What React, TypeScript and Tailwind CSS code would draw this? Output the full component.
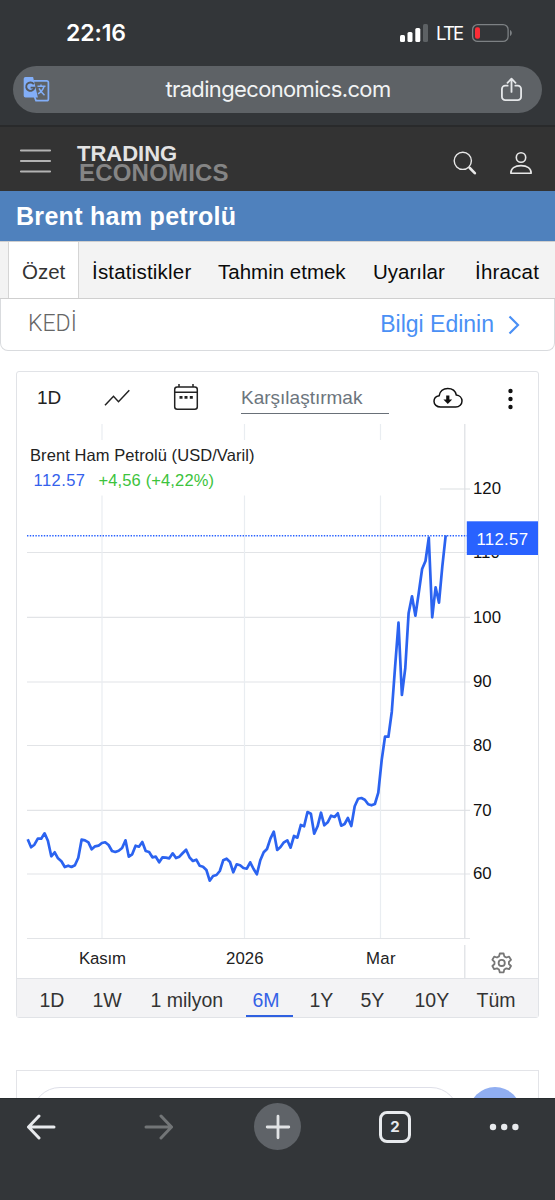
import React from 'react';
import clsx from 'clsx';

const CHART_LEFT = 27.7;
const CHART_STEP = 3.371;

// daily closes, already mapped to the chart's vertical axis
const closes = [
  839.3, 847.3, 844.7, 838.7, 838.7, 833.3, 840.7, 856.3, 852.3, 858.3, 861.3, 867, 865.7, 867, 865.3, 857.7,
  839.7, 840.3, 842.3, 849.3, 846.3, 845.7, 843, 842.3, 845, 851, 852, 850.7, 848, 840.3, 856.7, 854.3,
  845.7, 846.7, 842, 851, 852, 857.3, 856.7, 862.3, 857.3, 857.7, 858.3, 853.3, 858, 856.7, 853, 849.7,
  857.3, 861, 859.7, 865.7, 866.7, 870, 880.7, 876, 875, 871, 860.3, 858.7, 862, 872.3, 864.3, 865.3,
  868, 868.7, 862.3, 869, 874.3, 860.3, 852.3, 849, 838.7, 831.7, 850, 847, 842.3, 840.3, 847.7, 836,
  837.7, 825, 826.3, 812, 813.7, 833.7, 826.3, 812.7, 825.3, 822.3, 815.7, 817, 813.3, 825.7, 824, 818,
  826, 806.3, 798.7, 798, 799.7, 804.3, 805.3, 804, 792.7, 760, 736.7, 736.7, 711.7, 666.7, 622.7, 695,
  668, 613.3, 596.3, 615.7, 593.3, 569, 561, 537.7, 617.3, 587.3, 602.7, 566.7, 535.3,
];

const priceTicks = [
  { label: '120', y: 489 },
  { label: '110', y: 552.5 },
  { label: '100', y: 617.3 },
  { label: '90', y: 682 },
  { label: '80', y: 745.5 },
  { label: '70', y: 810.3 },
  { label: '60', y: 874 },
];

const months = [
  { label: 'Kasım', line: 102, x: 79, width: 47 },
  { label: '2026', line: 244.5, x: 226, width: 37.5 },
  { label: 'Mar', line: 380.5, x: 366, width: 29.5 },
];

const ranges = ['1D', '1W', '1 milyon', '6M', '1Y', '5Y', '10Y', 'Tüm'];

const StatusBar = () => (
  <div className="flex h-[66px] items-center pl-[66px] text-white">
    <span className="w-[333px] text-[23px] font-semibold tracking-[-0.1px]">22:16</span>
    <svg width="30" height="20" viewBox="0 0 30 20" fill="#fff">
      <rect x="1" y="12" width="5" height="7" rx="1.5" />
      <rect x="8.5" y="9" width="5" height="10" rx="1.5" />
      <rect x="16.3" y="5" width="5" height="14" rx="1.5" />
      <rect x="24" y="1" width="5" height="18" rx="1.5" fill="#5d6164" />
    </svg>
    <span className="mt-[2px] ml-[7px] w-[35px] text-[18.5px] tracking-[-1.8px]">LTE</span>
    <svg width="42" height="20" viewBox="0 0 42 20">
      <rect x="1.6" y="1.6" width="35.5" height="16.8" rx="5" fill="none" stroke="#7d8184" strokeWidth="1.3" />
      <rect x="4" y="4.2" width="5" height="11.6" rx="2" fill="#fb2c36" />
      <path d="M39 7v6c2.400-1 2.400-5 0-6z" fill="#7d8184" />
    </svg>
  </div>
);

const AddressBar = () => (
  <div className="mx-[13px] flex h-[47px] items-center rounded-full bg-[#5e6266] pr-[19px] pl-[10px]">
    <svg width="27" height="27" viewBox="0 0 27 27">
      <path d="M2.500 1h7.600l4.800 20.500H2.500A1.800 1.800 0 0 1 .7 19.700V2.800A1.800 1.800 0 0 1 2.500 1z" fill="#82aef8" />
      <path d="M11 4.900h12.700a1.700 1.700 0 0 1 1.700 1.700v16.300a1.700 1.700 0 0 1-1.700 1.700H13l-1.500-4" fill="none" stroke="#82aef8" strokeWidth="1.700" />
      <path d="M10.800 8.200a4.200 4.200 0 1 0 .7 3.400H7.600" fill="none" stroke="#55595e" strokeWidth="1.900" />
      <path d="M14.500 10.200h8M18 8.500v1.700M21 10.500c-1 3.300-3 5.600-6 7.300M16 12.300c1.300 2.600 3 4.700 5.500 7" fill="none" stroke="#82aef8" strokeWidth="1.500" />
    </svg>
    <span className="flex-1 pl-[6px] text-center text-[22px] tracking-[-0.65px] text-[#f1f3f4]">
      tradingeconomics.com
    </span>
    <svg width="23" height="27" viewBox="0 0 24 27" fill="none" stroke="#e4e6e8" strokeWidth="1.900" strokeLinecap="round" strokeLinejoin="round">
      <path d="M8 9.500H5.500A3.500 3.500 0 0 0 2 13v8a3.500 3.500 0 0 0 3.500 3.500h13A3.500 3.500 0 0 0 22 21v-8a3.500 3.500 0 0 0-3.500-3.500H16" />
      <path d="M12 16V2.500M7.800 6.500L12 2.200l4.200 4.300" />
    </svg>
  </div>
);

const SiteHeader = () => (
  <header className="mt-[12px] flex h-[66px] items-center border-t-2 border-[#292a2b] bg-[#333] pt-[4px] pr-[21px] pl-[19px]">
    <svg width="33" height="26" viewBox="0 0 33 26" stroke="#b3b3b3" strokeWidth="2.200" strokeLinecap="round">
      <path d="M2 2.500h29M2 13h29M2 23.500h29" />
    </svg>
    <div className="mt-[3px] ml-[25px] flex-1 font-['Liberation_Sans',sans-serif] font-bold">
      <div className="text-[22px] leading-[19px] text-[#e3e3e3]">TRADING</div>
      <div className="pl-[2px] text-[24px] leading-[19px] tracking-[0.200px] text-[#858585]">ECONOMICS</div>
    </div>
    <svg className="mt-[4px]" width="24" height="24" viewBox="0 0 24 24" fill="none" stroke="#e8e8e8" strokeLinecap="round">
      <circle cx="9.800" cy="9.800" r="8.600" strokeWidth="1.400" />
      <path d="M16.800 17l5 5.200" strokeWidth="2.600" />
    </svg>
    <svg className="mt-[4px] ml-[32px] mr-[1px]" width="24" height="24" viewBox="0 0 24 24" fill="none" stroke="#e8e8e8" strokeWidth="1.600">
      <circle cx="12" cy="6.500" r="4.700" />
      <path d="M1.800 22.200c0-4.800 4-7.600 10.200-7.600s10.200 2.800 10.200 7.600z" strokeLinejoin="round" />
    </svg>
  </header>
);

const PageTabs = () => (
  <nav className="flex h-[58px] overflow-hidden border-y border-[#cfcfcf] bg-[#f3f3f3] text-[20.500px] leading-[59px] whitespace-nowrap text-[#0a0a0a]">
    <span className="ml-[8px] h-[58px] w-[71px] border-x border-[#d5d5d5] bg-white pl-[13px] text-[#333]">Özet</span>
    <span className="w-[125px] pl-[13px] tracking-[0.200px]">İstatistikler</span>
    <span className="w-[156px] pl-[14px]">Tahmin etmek</span>
    <span className="w-[101px] pl-[13px]">Uyarılar</span>
    <span className="pl-[14px] tracking-[0.200px]">İhracat</span>
  </nav>
);

const Toolbar = () => (
  <div className="flex h-[52px] items-center text-[#222]">
    <span className="w-[87px] pl-[20px] text-[19px]">1D</span>
    <svg width="27" height="18" viewBox="0 0 27 18" fill="none" stroke="currentColor" strokeWidth="1.500">
      <path d="M1 16.300L9.500 7.300l5 5.400L25.300 1.300" />
    </svg>
    <svg className="-mt-[3px] ml-[42px]" width="26" height="28" viewBox="0 0 26 28" fill="none" stroke="currentColor" strokeWidth="1.500">
      <rect x="1.700" y="4" width="22.600" height="22.200" rx="2.500" />
      <path d="M2 9.200h22M6 1v3M20 1v3" />
      <path d="M6.500 14.300h3M11.500 14.300h3M16.800 14.300h3" strokeWidth="2.800" />
    </svg>
    <div className="ml-[42px] h-[31px] w-[148px] border-b-[1.5px] border-[#697078] text-[19px] leading-[29px] text-[#6c757d]">
      Karşılaştırmak
    </div>
    <svg className="ml-[44px]" width="30" height="22" viewBox="0 0 30 22" fill="none" stroke="#111" strokeWidth="1.500">
      <path d="M7.500 20C3.800 20 1 17.500 1 14.200c0-2.900 2.200-5 5.200-5.500C6.800 4.300 10.300 1.500 14.700 1.500c4.500 0 7.800 2.700 8.600 6.500 3.300.3 5.700 2.900 5.700 6 0 3.400-2.700 6-6.200 6z" />
      <path d="M13.200 8.500h3.200v4h2.800l-4.400 4.500-4.400-4.500h2.800z" fill="#111" stroke="none" />
    </svg>
    <svg className="mt-[2px] ml-[44px]" width="6" height="22" viewBox="0 0 6 22" fill="#111">
      <circle cx="3.500" cy="3" r="2.200" />
      <circle cx="3.500" cy="11" r="2.200" />
      <circle cx="3.500" cy="19" r="2.200" />
    </svg>
  </div>
);

const PriceChart = () => {
  const points = closes.map((y, i) => `${(CHART_LEFT + i * CHART_STEP).toFixed(1)},${y}`).join(' ');

  return (
    <svg className="block" width="521" height="554" viewBox="17 424 521 554" fontSize="16.8">
      <g stroke="#e2e4e7" strokeWidth="1.200">
        {priceTicks.map((tick) => (
          <path key={tick.label} d={`M${tick.label === '120' ? 440 : 27} ${tick.y}H470`} />
        ))}
        <path d="M27 938.500H470" />
        {months.map((month) => (
          <path key={month.label} d={`M${month.line} 424V938`} stroke="#e9edf1" />
        ))}
        <path d="M464.800 424V938M464.800 945V978" stroke="#dcdfe3" />
      </g>

      <rect x="28" y="440" width="410" height="55.500" fill="#fff" />
      <text x="30" y="461" fontSize="16.500" textLength="224.500" fill="#222">Brent Ham Petrolü (USD/Varil)</text>
      <text x="33.500" y="486" fontSize="16.500" textLength="51.500" fill="#3461ec">112.57</text>
      <text x="98.500" y="486" fontSize="16.500" textLength="115.500" fill="#3cc33c">+4,56 (+4,22%)</text>

      <path d="M27 535.800H467" stroke="#2962ff" strokeWidth="1.400" strokeDasharray="1.400 1.400" />
      <polyline points={points} fill="none" stroke="#2b63f0" strokeWidth="2.700" strokeLinejoin="round" />

      {priceTicks.map((tick) => (
        <text key={tick.label} x="473" y={tick.y + 5.300} fill="#111">{tick.label}</text>
      ))}
      <rect x="466.800" y="521.300" width="71.200" height="33.700" fill="#2962ff" />
      <text x="476.500" y="545" textLength="51.500" fill="#fff">112.57</text>

      {months.map((month) => (
        <text key={month.label} x={month.x} y="964" textLength={month.width} fill="#222">{month.label}</text>
      ))}

      {/* settings */}
      <g transform="translate(491.500 952.500)" fill="none" stroke="#777" strokeWidth="1.800" strokeLinejoin="round">
        <path d="M8.300 1h3.800l.7 2.900 2 1.100 2.800-.9 1.900 3.200-2.100 2v2.200l2.100 2-1.900 3.200-2.800-.8-2 1.100-.7 2.900H8.300L7.500 17l-2-1.100-2.800.8-1.800-3.200 2.100-2V9.300L.9 7.300l1.800-3.200 2.800.9 2-1.100z" />
        <circle cx="10.200" cy="10.400" r="3.100" />
      </g>
    </svg>
  );
};

const RangeTabs = () => (
  <div className="grid h-[39px] grid-cols-[53px_58px_102px_57px_51px_54px_62px_1fr] border-t border-[#e1e3e7] bg-[#f3f3f5] pl-[16px] text-[19.500px] leading-[43px] whitespace-nowrap text-[#333]">
    {ranges.map((range) => (
      <span
        key={range}
        className={clsx(
          'h-[38px] w-[47px] pl-[6.500px]',
          range === '6M' && 'border-b-[2.5px] border-[#2f60e0] text-[#3461e6]',
        )}
      >
        {range}
      </span>
    ))}
  </div>
);

const BrowserBar = () => (
  <div className="flex h-[102px] items-start border-t border-[#282c2f] bg-[#333639] pt-[4px]">
    <svg className="mt-[11px] ml-[26px]" width="30" height="26" viewBox="0 0 30 26" fill="none" stroke="#e8eaed" strokeWidth="3" strokeLinecap="round" strokeLinejoin="round">
      <path d="M28 13H2.500M13 2L2.500 13 13 24" />
    </svg>
    <svg className="mt-[11px] ml-[88px]" width="30" height="26" viewBox="0 0 30 26" fill="none" stroke="#727577" strokeWidth="3" strokeLinecap="round" strokeLinejoin="round">
      <path d="M2 13h25.500M17 2l10.500 11L17 24" />
    </svg>
    <div className="ml-[80px] flex size-[47px] items-center justify-center rounded-full bg-[#5f6368]">
      <svg width="26" height="26" viewBox="0 0 26 26" stroke="#e1e3e5" strokeWidth="2.800" strokeLinecap="round">
        <path d="M13 2.200v21.600M2.200 13h21.600" />
      </svg>
    </div>
    <div className="mt-[8px] ml-[78px] flex size-[32px] items-center justify-center rounded-[8px] border-[3px] border-[#e8eaed] text-[15px] font-bold text-[#e8eaed]">
      2
    </div>
    <svg className="mt-[20px] ml-[78px]" width="30" height="8" viewBox="0 0 30 8" fill="#e8eaed">
      <circle cx="4" cy="4" r="3.200" />
      <circle cx="15.200" cy="4" r="3.200" />
      <circle cx="26.400" cy="4" r="3.200" />
    </svg>
  </div>
);

const App = () => (
  <div className="h-[1200px] w-[555px] overflow-hidden bg-white font-['Liberation_Sans',Arial,sans-serif]">
    <div className="bg-[#333639] font-['Inter',sans-serif]">
      <StatusBar />
      <AddressBar />
      <SiteHeader />
    </div>

    <h1 className="h-[50px] bg-[#4f81bd] pl-[16px] text-[25px] leading-[51px] font-bold tracking-[0.300px] text-white">
      Brent ham petrolü
    </h1>
    <PageTabs />

    <div className="flex h-[52px] items-center rounded-b-[8px] border border-t-0 border-[#d9dbde] pr-[34px] pl-[27px]">
      <span className="flex-1 font-['Roboto',sans-serif] text-[23px] font-light text-[#666]">KEDİ</span>
      <span className="text-[23px] text-[#4a90f5]">Bilgi Edinin</span>
      <svg className="ml-[14px]" width="12" height="20" viewBox="0 0 12 20" fill="none" stroke="#4a90f5" strokeWidth="2.200">
        <path d="M1.500 1.500l8.500 8.500-8.500 8.500" />
      </svg>
    </div>

    <section className="mx-[16px] mt-[20px] rounded-[3px] border border-[#e1e3e7]">
      <Toolbar />
      <PriceChart />
      <RangeTabs />
    </section>

    <div className="mx-[16px] mt-[52px] h-[28px] overflow-hidden border border-b-0 border-[#e3e4e8] bg-white">
      <div className="flex items-start pt-[16px] pl-[15px]">
        <div className="h-[56px] w-[427px] rounded-full border border-[#dedfe8]" />
        <div className="ml-[10px] size-[52px] rounded-full bg-[#90aef1]" />
      </div>
    </div>
    <div className="font-['Inter',sans-serif]">
      <BrowserBar />
    </div>
  </div>
);

export default App;
